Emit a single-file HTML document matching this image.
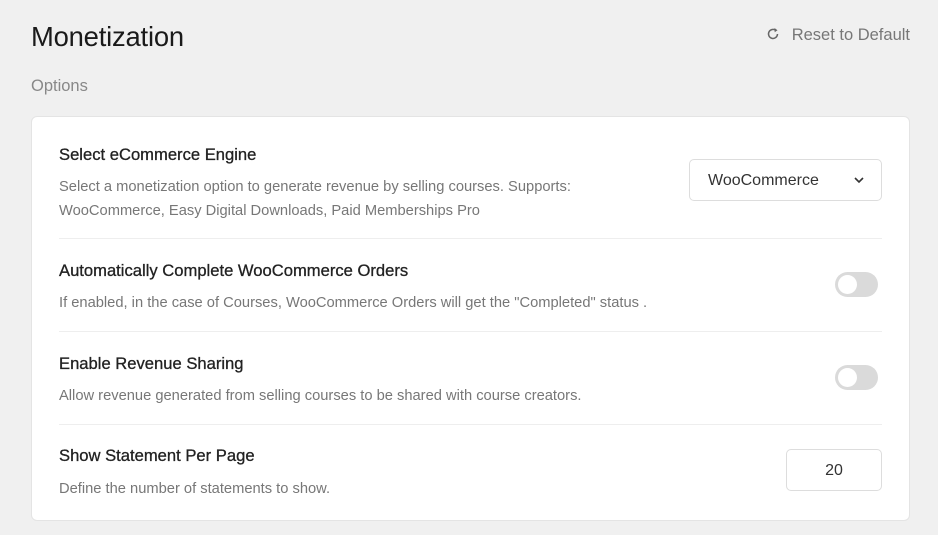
<!DOCTYPE html>
<html><head><meta charset="utf-8"><style>
*{box-sizing:border-box;margin:0;padding:0}
body{width:938px;height:535px;background:#f0f0f0;font-family:"Liberation Sans",sans-serif;position:relative;overflow:hidden;color:#222}
.a{position:absolute;white-space:nowrap}
h1{position:absolute;left:31px;top:21px;font-size:27.4px;font-weight:400;color:#1a1a1a;letter-spacing:-0.2px}
.reset{right:28px;top:26px;font-size:16.5px;color:#777}
.opt{left:31px;top:77px;font-size:16.5px;color:#888}
.card{position:absolute;left:31px;top:116px;width:879px;height:405px;background:#fff;border:1px solid #e4e4e4;border-radius:6px}
.t{font-size:16.6px;color:#222;font-weight:400;-webkit-text-stroke:0.3px #222}
.d{font-size:14.7px;color:#777;line-height:24px}
.sep{position:absolute;left:59px;width:823px;height:1px;background:#eee}
.tog{position:absolute;left:835px;width:43px;height:25px;border-radius:13px;background:#dadada}
.tog::after{content:"";position:absolute;left:3px;top:3px;width:19px;height:19px;border-radius:50%;background:#fff}
.box{position:absolute;background:#fff;border:1px solid #ddd;border-radius:5px;font-size:16px;color:#333}
</style></head><body>
<h1>Monetization</h1>
<div class="a reset"><svg width="14" height="14" viewBox="0 0 14 14" style="vertical-align:-1px;margin-right:12px"><path d="M11.5 7A4.5 4.5 0 1 1 9.5 3.2" fill="none" stroke="#666" stroke-width="1.5"/><path d="M8.5 1L11.5 3.2L8.7 5.2Z" fill="#666"/></svg>Reset to Default</div>
<div class="a opt">Options</div>
<div class="card"></div>
<div class="a t" style="left:59px;top:145px">Select eCommerce Engine</div>
<div class="a d" style="left:59px;top:175px">Select a monetization option to generate revenue by selling courses. Supports:<br>WooCommerce, Easy Digital Downloads, Paid Memberships Pro</div>
<div class="box" style="left:689px;top:159px;width:193px;height:42px;padding:12px 0 0 18px">WooCommerce<svg width="10" height="7" viewBox="0 0 10 7" style="position:absolute;left:164px;top:17px"><path d="M1 1L5 5L9 1" fill="none" stroke="#333" stroke-width="1.6"/></svg></div>
<div class="sep" style="top:238px"></div>
<div class="a t" style="left:59px;top:261px">Automatically Complete WooCommerce Orders</div>
<div class="a d" style="left:59px;top:291px">If enabled, in the case of Courses, WooCommerce Orders will get the "Completed" status .</div>
<div class="tog" style="top:272px"></div>
<div class="sep" style="top:331px"></div>
<div class="a t" style="left:59px;top:354px">Enable Revenue Sharing</div>
<div class="a d" style="left:59px;top:384px">Allow revenue generated from selling courses to be shared with course creators.</div>
<div class="tog" style="top:365px"></div>
<div class="sep" style="top:424px"></div>
<div class="a t" style="left:59px;top:446px">Show Statement Per Page</div>
<div class="a d" style="left:59px;top:477px">Define the number of statements to show.</div>
<div class="box" style="left:786px;top:449px;width:96px;height:42px;text-align:center;padding-top:12px">20</div>
</body></html>
